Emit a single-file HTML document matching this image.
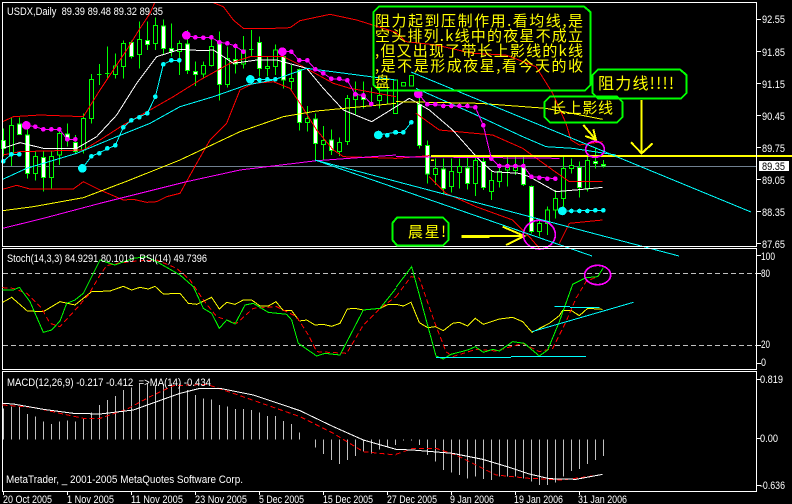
<!DOCTYPE html>
<html><head><meta charset="utf-8"><style>
html,body{margin:0;padding:0;background:#000;width:792px;height:504px;overflow:hidden}
svg{display:block}
text{font-family:"Liberation Sans","WenQuanYi Zen Hei",sans-serif;font-size:11px;fill:#fff}
.cn{font-family:"WenQuanYi Zen Hei","Noto Sans CJK SC",sans-serif;font-size:15px;fill:#ff0}
.l{fill:none;stroke-width:3}
.a{fill:none;stroke:#ff0;stroke-width:6}
.e{fill:none;stroke:#f0f;stroke-width:5}
.h rect{fill:#000;stroke:#0f0;stroke-width:3}
.w rect{fill:#fff;stroke:#0f0;stroke-width:3}
</style></head><body>
<svg width="792" height="504" viewBox="0 0 792 504" xmlns="http://www.w3.org/2000/svg" shape-rendering="crispEdges">
<rect width="792" height="504" fill="#000"/>

<!-- main chart, left half -->
<g transform="scale(.33333)">
<path class="l" stroke="#708090" d="M8 499H2268"/>
<path class="l" stroke="#0f0" d="M10 385V470M34 352V498M58 352V403M82 385V535M106 455V542M130 455V575M154 455V566M178 392V495M202 370V440M226 405V460M250 340V460M274 222V370M298 192V255M322 140V235M346 160V235M370 122V236M394 122V175M418 65V205M442 65V150M466 52V150M490 58V165M514 70V170M538 122V225M562 90V222M586 185V258M610 185V235M634 115V200M658 95V302M682 140V262M706 130V220M730 108V205M754 90V170M778 110V230M802 170V230M826 133V225M850 155V265M874 195V268M898 205V392M922 318V395M946 340V480M970 378V478M994 388V465M1018 412V468M1042 285V435M1066 245V345M1090 245V325M1114 262V320M1138 260V325M1162 262V310M1186 240V340M291 224H305M315 221H329M747 149H761"/>
<g class="w"><rect x="4" y="422" width="12" height="23"/><rect x="52" y="372" width="12" height="31"/><rect x="76" y="405" width="12" height="115"/><rect x="124" y="472" width="12" height="60"/><rect x="196" y="402" width="12" height="13"/><rect x="220" y="427" width="12" height="28"/><rect x="388" y="128" width="12" height="42"/><rect x="436" y="122" width="12" height="11"/><rect x="484" y="78" width="12" height="68"/><rect x="508" y="146" width="12" height="9"/><rect x="556" y="132" width="12" height="80"/><rect x="580" y="215" width="12" height="8"/><rect x="652" y="132" width="12" height="121"/><rect x="700" y="178" width="12" height="14"/><rect x="772" y="128" width="12" height="77"/><rect x="844" y="170" width="12" height="70"/><rect x="892" y="208" width="12" height="159"/><rect x="940" y="357" width="12" height="73"/><rect x="988" y="420" width="12" height="32"/><rect x="1084" y="287" width="12" height="11"/></g>
<g class="h"><rect x="28" y="377" width="12" height="83"/><rect x="100" y="470" width="12" height="50"/><rect x="148" y="470" width="12" height="62"/><rect x="172" y="400" width="12" height="65"/><rect x="244" y="355" width="12" height="95"/><rect x="268" y="238" width="12" height="117"/><rect x="340" y="198" width="12" height="26"/><rect x="364" y="130" width="12" height="70"/><rect x="412" y="118" width="12" height="46"/><rect x="460" y="76" width="12" height="54"/><rect x="532" y="130" width="12" height="25"/><rect x="604" y="196" width="12" height="26"/><rect x="628" y="140" width="12" height="56"/><rect x="676" y="175" width="12" height="78"/><rect x="724" y="150" width="12" height="42"/><rect x="796" y="199" width="12" height="6"/><rect x="820" y="150" width="12" height="50"/><rect x="868" y="236" width="12" height="8"/><rect x="916" y="355" width="12" height="12"/><rect x="964" y="422" width="12" height="11"/><rect x="1012" y="428" width="12" height="27"/><rect x="1036" y="295" width="12" height="130"/><rect x="1060" y="280" width="12" height="18"/><rect x="1132" y="286" width="12" height="16"/><rect x="1180" y="240" width="12" height="100"/><rect x="1204" y="248" width="12" height="10"/><rect x="1228" y="226" width="12" height="32"/></g>

<!-- MAs -->
<path class="l" stroke="#f00" d="M8 365L40 350L120 345L250 350L300 270L340 210L380 150L420 85L450 40L464 8M640 8L670 20L700 60L730 85L820 85L870 83L900 62L990 43L1070 60L1188 97"/>
<path class="l" stroke="#f00" d="M8 465L60 455L250 450L300 420L370 375L450 330L520 290L600 240L690 190L750 170L850 170L900 195L1000 250L1050 265L1188 290"/>
<path class="l" stroke="#f00" d="M8 568L50 556L90 567L220 567L250 545L300 570L370 600L400 598L440 607L470 605L500 590L540 580L590 490L630 420L680 370L720 270L760 250L820 245L870 265L900 310L950 390L1000 450L1030 470L1188 475"/>
<path class="l" stroke="#fff" d="M8 445L60 428L130 445L230 445L290 410L350 345L410 250L470 170L540 148L610 152L640 150L700 190L770 180L830 180L920 205L970 265L1030 330L1115 365L1188 320"/>
<path class="l" stroke="#0ff" d="M8 538L80 505L230 460L350 410L450 370L540 320L640 290L740 255L820 240L920 205L1188 240"/>
<path class="l" stroke="#ff0" d="M8 632L100 620L250 593L390 540L540 480L720 395L850 350L950 333L1188 310"/>
<path class="l" stroke="#f0f" d="M8 685L130 655L300 610L560 545L720 510L950 482L1188 465"/>

<!-- magenta dots -->
<path class="l" stroke="#f0f" d="M79 376L106 380L130 388L178 388L202 418L226 418M559 106L586 112L634 112L658 127L682 130L706 138L730 155M847 155L874 155L898 181L922 181L946 208L970 220L994 236L1042 241L1066 283L1090 286L1114 312"/>
<g fill="#f0f"><circle cx="79" cy="376" r="13"/><circle cx="559" cy="106" r="13"/><circle cx="847" cy="155" r="13"/><circle cx="106" cy="380" r="7"/><circle cx="130" cy="388" r="7"/><circle cx="154" cy="388" r="7"/><circle cx="178" cy="388" r="7"/><circle cx="202" cy="418" r="7"/><circle cx="226" cy="418" r="7"/><circle cx="586" cy="112" r="7"/><circle cx="610" cy="113" r="7"/><circle cx="634" cy="112" r="7"/><circle cx="658" cy="127" r="7"/><circle cx="682" cy="130" r="7"/><circle cx="706" cy="138" r="7"/><circle cx="730" cy="155" r="7"/><circle cx="874" cy="155" r="7"/><circle cx="898" cy="181" r="7"/><circle cx="922" cy="181" r="7"/><circle cx="946" cy="208" r="7"/><circle cx="970" cy="220" r="7"/><circle cx="994" cy="236" r="7"/><circle cx="1018" cy="236" r="7"/><circle cx="1042" cy="241" r="7"/><circle cx="1066" cy="283" r="7"/><circle cx="1090" cy="286" r="7"/><circle cx="1114" cy="312" r="7"/></g>
<!-- cyan dots -->
<path class="l" stroke="#0ff" d="M10 484L34 463L58 463M247 505L274 469L346 436L370 382L394 361L442 340L466 290L490 193L514 181L538 181M751 238L826 238M1135 405L1186 397"/>
<g fill="#0ff"><circle cx="10" cy="484" r="7"/><circle cx="34" cy="463" r="7"/><circle cx="58" cy="463" r="7"/><circle cx="247" cy="505" r="13"/><circle cx="274" cy="469" r="7"/><circle cx="298" cy="460" r="7"/><circle cx="322" cy="445" r="7"/><circle cx="346" cy="436" r="7"/><circle cx="370" cy="382" r="7"/><circle cx="394" cy="361" r="7"/><circle cx="418" cy="352" r="7"/><circle cx="442" cy="340" r="7"/><circle cx="466" cy="290" r="7"/><circle cx="490" cy="193" r="7"/><circle cx="514" cy="181" r="7"/><circle cx="538" cy="181" r="7"/><circle cx="751" cy="238" r="13"/><circle cx="778" cy="240" r="7"/><circle cx="802" cy="238" r="7"/><circle cx="826" cy="238" r="7"/><circle cx="1135" cy="405" r="13"/><circle cx="1162" cy="406" r="7"/><circle cx="1186" cy="397" r="7"/></g>
</g>

<!-- main chart, right half -->
<g transform="translate(396 0) scale(.33333)">
<path class="l" stroke="#0f0" d="M70 285V445M94 422V550M118 475V555M142 475V580M166 475V578M190 475V565M214 470V568M238 465V588M262 470V570M286 515V600M310 490V562M334 470V560M358 465V525M382 465V558M406 557V700M430 655V710M454 620V705M478 570V655M502 470V630M526 475V520M550 485V592M574 470V575M598 445V505M622 480V503"/>
<g class="w"><rect x="64" y="314" width="12" height="123"/><rect x="88" y="437" width="12" height="85"/><rect x="136" y="507" width="12" height="58"/><rect x="208" y="504" width="12" height="46"/><rect x="256" y="484" width="12" height="78"/><rect x="376" y="499" width="12" height="54"/><rect x="400" y="559" width="12" height="136"/><rect x="544" y="502" width="12" height="60"/><rect x="592" y="484" width="12" height="6"/><rect x="616" y="494" width="12" height="4"/></g>
<g class="h"><rect x="112" y="505" width="12" height="19"/><rect x="160" y="514" width="12" height="46"/><rect x="184" y="500" width="12" height="18"/><rect x="232" y="482" width="12" height="68"/><rect x="280" y="542" width="12" height="33"/><rect x="304" y="515" width="12" height="30"/><rect x="328" y="497" width="12" height="13"/><rect x="352" y="497" width="12" height="15"/><rect x="424" y="670" width="12" height="25"/><rect x="448" y="630" width="12" height="40"/><rect x="472" y="595" width="12" height="35"/><rect x="496" y="506" width="12" height="89"/><rect x="520" y="497" width="12" height="9"/><rect x="568" y="482" width="12" height="83"/></g>

<path class="l" stroke="#f00" d="M0 97L30 125L120 135L230 160L330 165L420 200L470 280L510 370L525 420L550 435L620 425"/>
<path class="l" stroke="#f00" d="M60 340L130 390L290 405L380 445L470 510L520 545L620 545"/>
<path class="l" stroke="#f00" d="M0 475L100 467M100 530L150 580L240 620L350 660L400 710L430 745M490 730L520 670L620 660"/>
<path class="l" stroke="#fff" d="M0 320L40 295L100 330L170 390L250 480L290 515L370 520L400 530L480 575L560 568L620 562"/>
<path class="l" stroke="#0ff" d="M60 265L230 340L380 410L450 440L530 445L660 465"/>
<path class="l" stroke="#ff0" d="M0 305L250 310L450 325L620 358"/>
<path class="l" stroke="#f0f" d="M0 470L490 475"/>
<path d="M105 468H1188" fill="none" stroke="#ff0" stroke-width="6"/>
<rect x="105" y="478" width="9" height="5" fill="#ff0"/>

<path class="l" stroke="#f0f" d="M67 282L94 313L238 322L262 376L286 476L310 498L382 498L406 530L478 536"/>
<g fill="#f0f"><circle cx="67" cy="282" r="13"/><circle cx="94" cy="313" r="7"/><circle cx="118" cy="313" r="7"/><circle cx="142" cy="318" r="7"/><circle cx="166" cy="318" r="7"/><circle cx="190" cy="318" r="7"/><circle cx="214" cy="318" r="7"/><circle cx="238" cy="322" r="7"/><circle cx="262" cy="376" r="7"/><circle cx="286" cy="476" r="7"/><circle cx="310" cy="498" r="7"/><circle cx="334" cy="498" r="7"/><circle cx="358" cy="498" r="7"/><circle cx="382" cy="498" r="7"/><circle cx="406" cy="530" r="7"/><circle cx="430" cy="533" r="7"/><circle cx="454" cy="536" r="7"/><circle cx="478" cy="536" r="7"/></g>
<path class="l" stroke="#0ff" d="M0 397L22 397L46 367M499 633L622 631"/>
<g fill="#0ff"><circle cx="0" cy="397" r="7"/><circle cx="22" cy="397" r="7"/><circle cx="46" cy="367" r="7"/><circle cx="499" cy="633" r="13"/><circle cx="526" cy="633" r="7"/><circle cx="550" cy="633" r="7"/><circle cx="574" cy="633" r="7"/><circle cx="598" cy="631" r="7"/><circle cx="622" cy="631" r="7"/></g>

<!-- arrows -->
<path class="a" d="M562 375L600 420M568 408L600 420L592 388M737 300V460M705 427L737 460L770 430M320 680L385 708L330 735"/>
<path d="M197 709H280" fill="none" stroke="#ff0" stroke-width="9"/><path d="M280 708H385" fill="none" stroke="#ff0" stroke-width="6"/>
<!-- ellipses -->
<ellipse class="e" cx="597" cy="448" rx="28" ry="24"/>
<ellipse class="e" cx="430" cy="704" rx="48" ry="43"/>
</g>

<!-- trendlines -->
<g fill="none" stroke="#0ff" stroke-width="1">
<path d="M315 160L679 256M315 160L592 256M411 72L751 212"/>
</g>

<!-- frames -->
<g fill="none" stroke="#fff" stroke-width="1">
<path d="M2.5 2.5H756.5V246.5H2.5ZM2.5 248.5H756.5V369.5H2.5ZM2.5 371.5H756.5V491.5H2.5Z"/>
<path d="M757 19.5h4M757 51.5h4M757 83.5h4M757 115.5h4M757 147.5h4M757 179.5h4M757 211.5h4M757 243.5h4M757 255.5h4M757 273.5h4M757 345.5h4M757 363.5h4M757 379.5h4M757 438.5h4M757 485.5h4"/>
<path d="M3.5 492v3M67.5 492v3M131.5 492v3M195.5 492v3M259.5 492v3M323.5 492v3M387.5 492v3M451.5 492v3M515.5 492v3M579.5 492v3"/>
</g>

<!-- stochastic panel -->
<g fill="none" stroke="#c0c0c0" stroke-width="1" stroke-dasharray="5 3"><path d="M3 273.5H756M3 345.5H756"/></g>
<g transform="translate(0 245) scale(.33333)">
<path class="l" stroke="#ff0" d="M8 172L35 157L82 198L130 200L180 170L225 180L275 140L330 138L370 124L395 135L420 127L445 132L465 124L490 147L540 145L565 175L590 178L635 157L658 192L680 172L705 178L730 165L755 165L780 183L805 183L828 170L850 197L875 197L898 228L920 225L945 240L970 238L995 244L1020 235L1042 192L1065 190L1090 195L1140 190L1165 178L1188 178"/>
<path class="l" stroke="#f00" stroke-dasharray="15 9" d="M8 128L40 130L80 145L125 190L150 235L180 245L230 190L265 150L300 90L320 62L350 55L410 48L470 45L530 70L570 105L610 165L650 215L710 235L760 190L830 185L890 215L925 270L950 320L1040 325L1090 240L1140 190L1188 155"/>
<path class="l" stroke="#0f0" d="M8 135L40 135L58 127L90 170L130 262L155 255L180 228L200 175L225 165L250 145L300 45L345 60L400 40L440 35L470 50L540 90L580 125L610 190L635 205L658 250L680 225L705 237L735 180L760 175L805 202L860 208L875 225L895 295L950 333L975 325L1020 330L1090 195L1140 190L1188 130"/>
</g>
<g transform="translate(396 245) scale(.33333)">
<path class="l" stroke="#ff0" d="M0 178L22 183L45 172L70 233L95 248L118 245L142 257L170 235L190 232L215 243L238 220L262 238L310 222L350 217L380 230L408 262L460 235L490 212L500 196L525 196L550 212L575 190L620 193"/>
<path class="l" stroke="#f00" stroke-dasharray="15 9" d="M0 155L45 95L70 100L115 230L150 320L170 335L240 313L300 318L380 295L430 320L470 310L510 230L540 160L570 110L610 92"/>
<path class="l" stroke="#0f0" d="M0 127L47 65L120 333L142 342L165 328L215 315L238 305L262 322L290 313L310 318L350 290L385 295L430 333L455 315L490 230L530 118L570 98L605 95L622 68"/>
<path class="l" stroke="#0ff" d="M120 337H345M345 334H570M408 260L712 172M475 184H522M522 187H610"/>
<ellipse class="e" cx="605" cy="90" rx="39" ry="29"/>
</g>

<!-- MACD panel -->
<g transform="translate(0 370) scale(.33333)">
<path class="l" stroke="#c0c0c0" d="M10 208V115M34 208V110M58 208V110M82 208V132M106 208V140M130 208V155M154 208V162M178 208V155M202 208V152M226 208V155M250 208V147M274 208V127M298 208V105M322 208V90M346 208V78M370 208V60M394 208V52M418 208V40M442 208V40M466 208V45M490 208V42M514 208V40M538 208V40M562 208V60M586 208V75M610 208V85M634 208V88M658 208V105M682 208V110M706 208V117M730 208V117M754 208V120M778 208V128M802 208V138M826 208V138M850 208V153M874 208V162M898 208V188M946 208V233M970 208V252M994 208V270M1018 208V282M1042 208V270M1066 208V258M1090 208V245M1114 208V250M1138 208V238M1162 208V230M1186 208V225"/>
<path class="l" stroke="#f00" stroke-dasharray="15 9" d="M8 105L100 112L180 130L250 145L300 145L380 118L450 80L520 47L620 43L700 70L800 105L900 140L1000 190L1090 245L1188 255"/>
<path class="l" stroke="#fff" d="M8 100L40 102L130 118L220 130L300 132L400 120L470 95L540 70L600 55L660 55L760 75L900 122L1000 170L1090 210L1188 238"/>
</g>
<g transform="translate(396 370) scale(.33333)">
<path class="l" stroke="#c0c0c0" d="M22 208V212M46 208V212M70 208V225M94 208V255M118 208V275M142 208V300M166 208V308M190 208V315M214 208V325M238 208V320M262 208V327M286 208V330M310 208V320M334 208V320M358 208V320M382 208V325M406 208V335M430 208V345M454 208V345M478 208V338M502 208V320M526 208V303M550 208V297M574 208V282M598 208V270M622 208V258"/>
<path class="l" stroke="#f00" stroke-dasharray="15 9" d="M0 253L50 235L120 235L180 255L240 285L300 315L400 325L500 330L610 315"/>
<path class="l" stroke="#fff" d="M0 238L50 240L170 250L260 268L340 292L400 312L460 326L540 328L620 313"/>
</g>

<!-- annotation boxes -->
<g fill="none" stroke="#0f0" stroke-width="2">
<path d="M379 6.5H584L590.5 12V85L585 90.5H380L373.5 85V12Z"/>
<path d="M598 69.5H680L686.5 75V93L681 98.5H598L592.5 93V75Z"/>
<path d="M550 96.5H617L622.5 102V117L617 122.5H550L544.5 117V102Z"/>
<path d="M397 217.5H443L448.5 223V240L443 245.5H397L392.5 240V223Z"/>
</g>
<g shape-rendering="auto">
<text class="cn" x="375" y="26" textLength="208" lengthAdjust="spacing">阻力起到压制作用.看均线,是</text>
<text class="cn" x="375" y="41" textLength="208" lengthAdjust="spacing">空头排列.k线中的夜星不成立</text>
<text class="cn" x="375" y="56" textLength="208" lengthAdjust="spacing">,但又出现了带长上影线的k线</text>
<text class="cn" x="375" y="71" textLength="208" lengthAdjust="spacing">,是不是形成夜星,看今天的收</text>
<text class="cn" x="375" y="87">盘</text>
<text class="cn" x="598" y="89" textLength="76" lengthAdjust="spacing" style="font-size:16px">阻力线!!!!</text>
<text class="cn" x="551" y="113" textLength="62" lengthAdjust="spacing">长上影线</text>
<text class="cn" x="408" y="237" textLength="38" lengthAdjust="spacing">晨星!</text>

<text x="7" y="15" textLength="156" lengthAdjust="spacingAndGlyphs">USDX,Daily&#160;&#160;89.39 89.48 89.32 89.35</text>
<text x="7" y="262" textLength="200" lengthAdjust="spacingAndGlyphs">Stoch(14,3,3) 84.9291 80.1019&#160;&#160;RSI(14) 49.7396</text>
<text x="7" y="386" textLength="204" lengthAdjust="spacingAndGlyphs">MACD(12,26,9) -0.217 -0.412&#160;&#160;=&gt;MA(14) -0.434</text>
<text x="6" y="483" textLength="237" lengthAdjust="spacingAndGlyphs">MetaTrader, _ 2001-2005 MetaQuotes Software Corp.</text>

<text x="762" y="23" textLength="23" lengthAdjust="spacingAndGlyphs">92.55</text><text x="762" y="56" textLength="23" lengthAdjust="spacingAndGlyphs">91.85</text><text x="762" y="88" textLength="23" lengthAdjust="spacingAndGlyphs">91.15</text><text x="762" y="120" textLength="23" lengthAdjust="spacingAndGlyphs">90.45</text><text x="762" y="152" textLength="23" lengthAdjust="spacingAndGlyphs">89.75</text><text x="762" y="184" textLength="23" lengthAdjust="spacingAndGlyphs">89.05</text><text x="762" y="216" textLength="23" lengthAdjust="spacingAndGlyphs">88.35</text><text x="762" y="248" textLength="23" lengthAdjust="spacingAndGlyphs">87.65</text>
<rect x="759" y="161" width="30" height="10" fill="#fff" shape-rendering="crispEdges"/>
<text x="762" y="170" textLength="23" lengthAdjust="spacingAndGlyphs" style="fill:#000">89.35</text>
<text x="761" y="260" textLength="14" lengthAdjust="spacingAndGlyphs">100</text><text x="761" y="277" textLength="9" lengthAdjust="spacingAndGlyphs">80</text><text x="761" y="348" textLength="9" lengthAdjust="spacingAndGlyphs">20</text><text x="761" y="366" textLength="5" lengthAdjust="spacingAndGlyphs">0</text>
<text x="760" y="383" textLength="23" lengthAdjust="spacingAndGlyphs">0.819</text><text x="760" y="442" textLength="18" lengthAdjust="spacingAndGlyphs">0.00</text><text x="760" y="489" textLength="25" lengthAdjust="spacingAndGlyphs">-0.636</text>

<g>
<text x="3" y="503" textLength="49" lengthAdjust="spacingAndGlyphs">20 Oct 2005</text>
<text x="67" y="503" textLength="47" lengthAdjust="spacingAndGlyphs">1 Nov 2005</text>
<text x="131" y="503" textLength="52" lengthAdjust="spacingAndGlyphs">11 Nov 2005</text>
<text x="195" y="503" textLength="52" lengthAdjust="spacingAndGlyphs">23 Nov 2005</text>
<text x="259" y="503" textLength="45" lengthAdjust="spacingAndGlyphs">5 Dec 2005</text>
<text x="323" y="503" textLength="50" lengthAdjust="spacingAndGlyphs">15 Dec 2005</text>
<text x="387" y="503" textLength="50" lengthAdjust="spacingAndGlyphs">27 Dec 2005</text>
<text x="450" y="503" textLength="44" lengthAdjust="spacingAndGlyphs">9 Jan 2006</text>
<text x="514" y="503" textLength="49" lengthAdjust="spacingAndGlyphs">19 Jan 2006</text>
<text x="578" y="503" textLength="49" lengthAdjust="spacingAndGlyphs">31 Jan 2006</text>
</g>
</g>
</svg>
</body></html>
